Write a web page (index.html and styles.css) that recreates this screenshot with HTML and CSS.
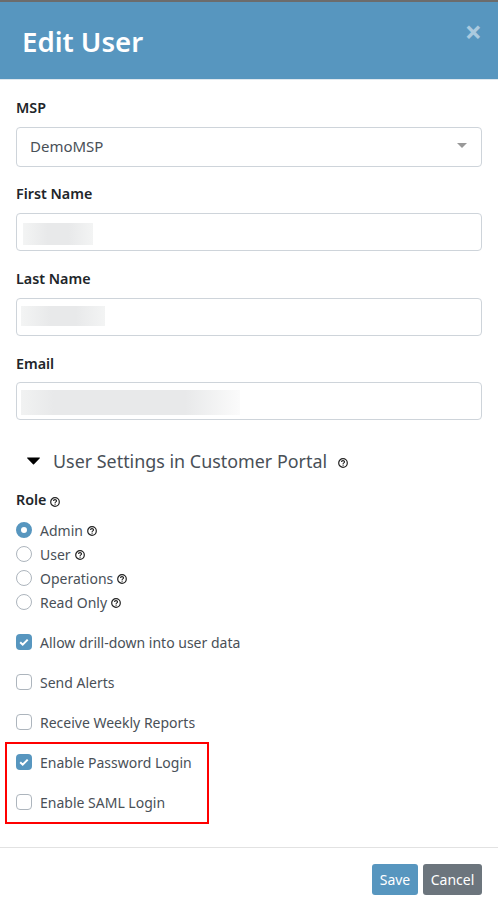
FILE: index.html
```html
<!doctype html>
<html>
  <head>
    <title>Edit User</title>
    <link rel="stylesheet" href="styles.css">
  </head>
  <body>
    <div class="modal">
      <div class="modal-header">
        <h1>Edit User</h1>
        <span class="close">&times;</span>
      </div>
      <div class="modal-body">
        <label class="field-label label-msp">MSP</label>
        <div class="select">
          <span>DemoMSP</span>
          <i class="caret"></i>
        </div>

        <label class="field-label label-first">First Name</label>
        <div class="input"><div class="blur blur-first"></div></div>

        <label class="field-label label-last">Last Name</label>
        <div class="input"><div class="blur blur-last"></div></div>

        <label class="field-label label-email">Email</label>
        <div class="input"><div class="blur blur-email"></div></div>

        <div class="section-title">
          <svg class="section-arrow" width="13" height="8" viewBox="0 0 13 8"><path d="M0.5 0.5h12a0.5 0.5 0 0 1 0.3 0.8l-5.8 6a0.7 0.7 0 0 1-1 0l-5.8-6a0.5 0.5 0 0 1 0.3-0.8z" fill="#000"/></svg>
          <span>User Settings in Customer Portal</span>
          <svg class="help help-title" viewBox="0 0 10 10"><use href="#help"/></svg>
        </div>

        <div class="role-label">Role <svg class="help" viewBox="0 0 10 10"><use href="#help"/></svg></div>

        <div class="radios">
          <div class="option"><i class="radio on"></i><span>Admin</span><svg class="help" viewBox="0 0 10 10"><use href="#help"/></svg></div>
          <div class="option"><i class="radio"></i><span>User</span><svg class="help" viewBox="0 0 10 10"><use href="#help"/></svg></div>
          <div class="option"><i class="radio"></i><span>Operations</span><svg class="help" viewBox="0 0 10 10"><use href="#help"/></svg></div>
          <div class="option"><i class="radio"></i><span>Read Only</span><svg class="help" viewBox="0 0 10 10"><use href="#help"/></svg></div>
        </div>

        <div class="checks">
          <div class="option"><i class="check on"><svg viewBox="0 0 16 16" width="16" height="16"><use href="#tick"/></svg></i><span>Allow drill-down into user data</span></div>
          <div class="option"><i class="check"></i><span>Send Alerts</span></div>
          <div class="option"><i class="check"></i><span>Receive Weekly Reports</span></div>
          <div class="highlighted">
            <div class="option"><i class="check on"><svg viewBox="0 0 16 16" width="16" height="16"><use href="#tick"/></svg></i><span>Enable Password Login</span></div>
            <div class="option"><i class="check"></i><span>Enable SAML Login</span></div>
          </div>
        </div>
      </div>
      <div class="modal-footer">
        <button class="btn btn-save">Save</button>
        <button class="btn btn-cancel">Cancel</button>
      </div>
    </div>

    <svg class="defs" width="0" height="0">
      <symbol id="help" viewBox="0 0 10 10">
        <circle cx="5" cy="5" r="4.3" fill="none" stroke="#222" stroke-width="1.2"/>
        <path d="M3.5 4.1c0-1.9 3-1.9 3-0.2 0 1-1.4 1-1.4 2" fill="none" stroke="#222" stroke-width="1.1"/>
        <rect x="4.5" y="6.6" width="1.2" height="1.1" fill="#222"/>
      </symbol>
      <symbol id="tick" viewBox="0 0 16 16">
        <path d="M4.2 8.2l2.5 2.4 5-5" fill="none" stroke="#fff" stroke-width="2"/>
      </symbol>
    </svg>
  </body>
</html>
```

FILE: styles.css
```css
* { margin: 0; padding: 0; box-sizing: border-box; }
html, body { height: 100%; }
body { background: #fff; font: 14px "Noto Sans", "Open Sans", Arial, sans-serif; color: #495057; overflow: hidden; }

.defs { position: absolute; }

.modal { height: 910px; display: flex; flex-direction: column; border-top: 2px solid #6c6c6c; }

.modal-header {
  height: 78px;
  flex: none;
  background: #5796bf;
  border-bottom: 1px solid #dee7ee;
  padding: 0 16px 0 22px;
  display: flex;
  justify-content: space-between;
  color: #fff;
}
.modal-header h1 { font-size: 27.6px; font-weight: 600; line-height: 79px; }
.close { font-size: 30px; font-weight: 700; line-height: 60px; color: #fff; opacity: 0.5; }

.modal-body { flex: 1; padding: 0 16px; }

.field-label { display: block; font-size: 14.3px; font-weight: 600; color: #212529; line-height: 20px; }
.label-msp { margin-top: 18px; margin-bottom: 9px; }
.label-first { margin-top: 17px; margin-bottom: 9px; }
.label-last { margin-top: 18px; margin-bottom: 9px; }
.label-email { margin-top: 18px; margin-bottom: 8px; }

.select, .input { border: 1px solid #ced4da; border-radius: 4px; background: #fff; }
.select { height: 40px; padding: 0 14px 2px 13px; display: flex; align-items: center; justify-content: space-between; color: #495057; font-size: 15px; }
.caret { width: 0; height: 0; border-left: 5.5px solid transparent; border-right: 5.5px solid transparent; border-top: 5.5px solid #999; margin-top: -2px; }
.input { height: 38px; }

.blur { background: linear-gradient(90deg, #f3f4f4, #e8e9ea 35%, #e8e9ea 65%, #f3f4f4); }
.blur-first { width: 70px; height: 22px; margin: 9px 0 0 6px; }
.blur-last { width: 84px; height: 20px; margin: 7px 0 0 4px; }
.blur-email { width: 219px; height: 25px; margin: 7px 0 0 4px; background: linear-gradient(90deg, #f1f2f2, #e8e9ea 15%, #e8e9ea 75%, #fbfbfb); }

.section-title { display: flex; align-items: center; margin-top: 29px; height: 24px; padding-left: 11px; font-size: 17.9px; color: #495057; }
.section-arrow { margin-right: 13px; }
.help-title { margin-left: 11px; margin-top: 3px; }

.help { width: 10px; height: 10px; flex: none; }

.role-label { margin-top: 17px; font-weight: 600; font-size: 14.3px; color: #212529; line-height: 20px; display: flex; align-items: center; gap: 4px; }
.role-label .help { margin-top: 3px; }

.option { display: flex; align-items: center; height: 24px; color: #495057; }
.option span { margin-left: 8px; }
.option .help { margin-left: 4px; margin-top: 2px; }

.radios { margin-top: 8px; }
.radio { width: 16px; height: 16px; border-radius: 50%; border: 1px solid #adb5bd; background: #fff; flex: none; }
.radio.on { border: 5px solid #5796bf; }

.checks { margin-top: 16px; }
.checks .option { height: 24px; margin-bottom: 16px; }
.check { width: 16px; height: 16px; border-radius: 4px; border: 1px solid #adb5bd; background: #fff; flex: none; display: block; }
.check.on { background: #5796bf; border: none; }
.check svg { display: block; }

/* annotation drawn over the screenshot */
.highlighted { position: relative; }
.highlighted::after { content: ""; position: absolute; left: -11px; right: 273px; top: -8px; bottom: -10px; border: 2px solid #f00; }
.highlighted .option:last-child { margin-bottom: 0; }

.modal-footer { flex: none; height: 63px; border-top: 1px solid #e2e2e2; padding: 16px 16px 0 0; display: flex; justify-content: flex-end; gap: 5px; align-items: flex-start; margin-bottom: 0; }
.btn { height: 31px; border: none; border-radius: 3px; color: #fff; font: 14px "Noto Sans", "Open Sans", Arial, sans-serif; }
.btn-save { width: 46px; background: #5796bf; }
.btn-cancel { width: 59px; background: #6c757d; }
```
